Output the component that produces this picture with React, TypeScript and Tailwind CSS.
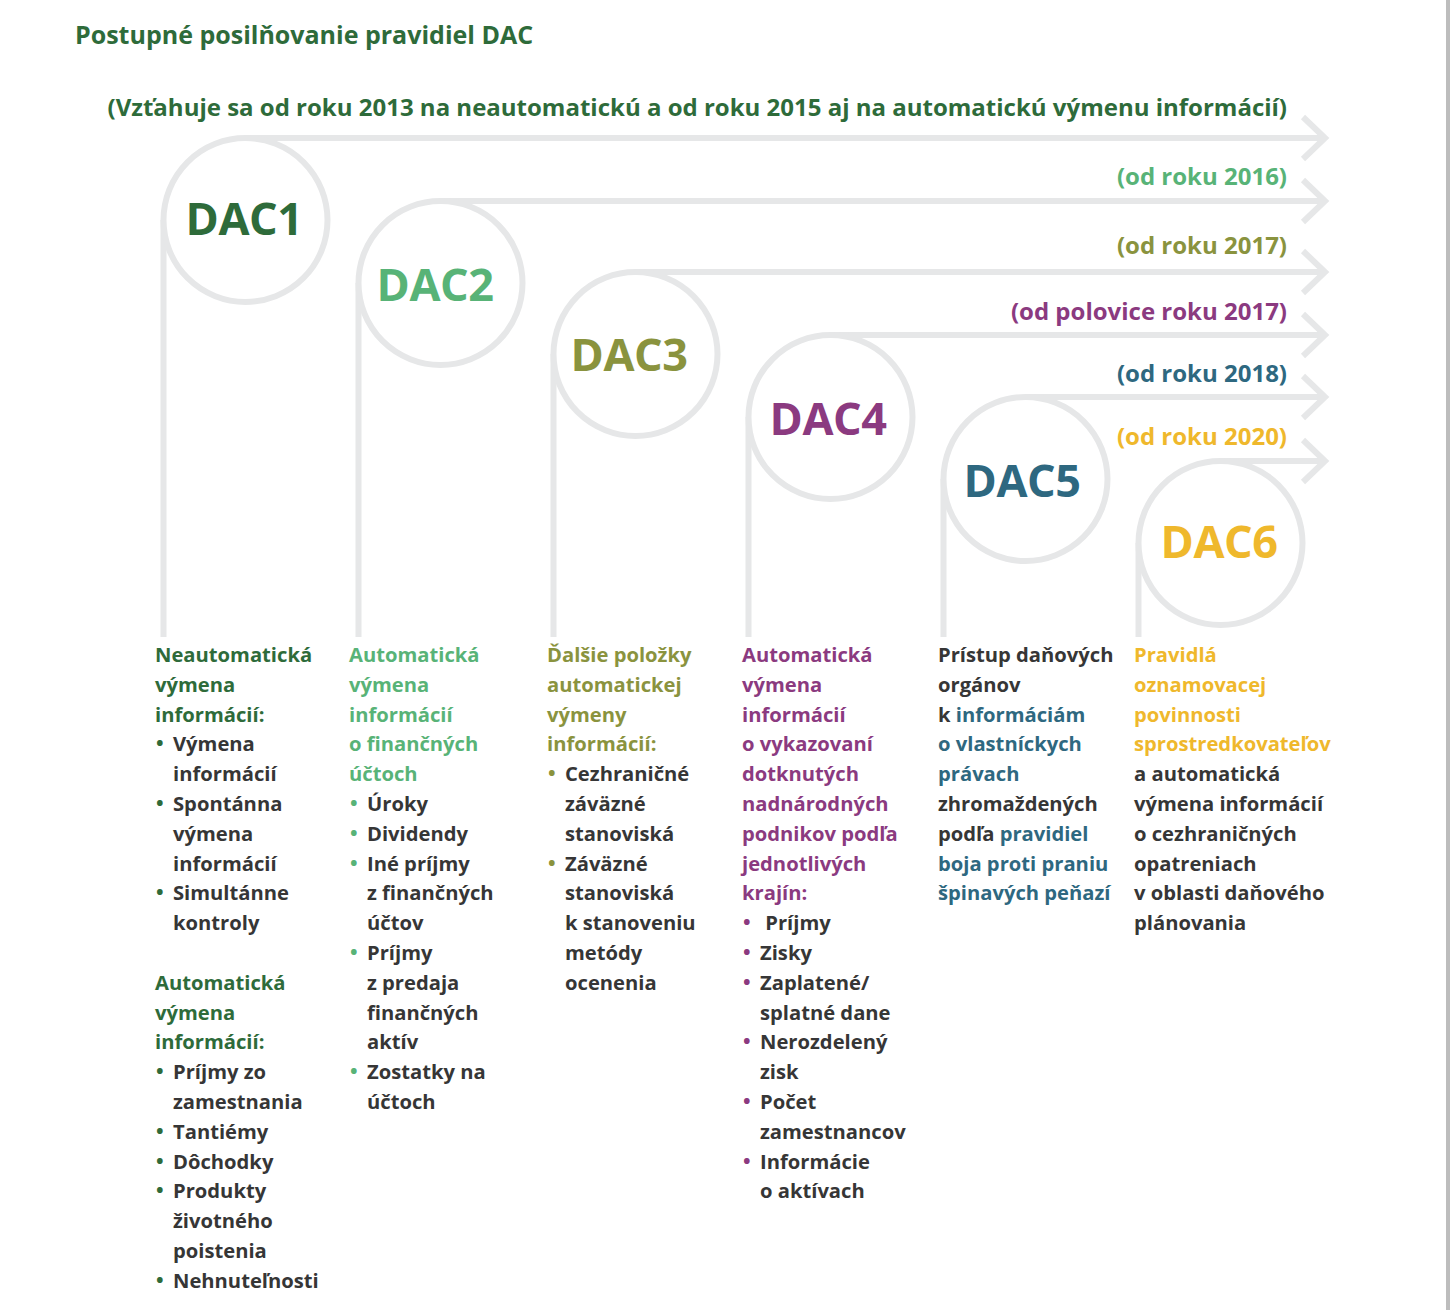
import React from "react";

const LINE = "#e6e7e8";
const lineYs = [138, 201, 272, 335, 397, 461];

const dacs = [
  { name: "DAC1", color: "text-[#2e6b3a]", x: 244, y: 218 },
  { name: "DAC2", color: "text-[#58b377]", x: 435, y: 284 },
  { name: "DAC3", color: "text-[#8a933e]", x: 629, y: 354 },
  { name: "DAC4", color: "text-[#8b3a80]", x: 828, y: 418 },
  { name: "DAC5", color: "text-[#2e6880]", x: 1022, y: 480 },
  { name: "DAC6", color: "text-[#efb82c]", x: 1219, y: 541 },
];

const dates = [
  { t: "(od roku 2016)", c: "text-[#58b377]", y: 176 },
  { t: "(od roku 2017)", c: "text-[#8a933e]", y: 245 },
  { t: "(od polovice roku 2017)", c: "text-[#8b3a80]", y: 311 },
  { t: "(od roku 2018)", c: "text-[#2e6880]", y: 373 },
  { t: "(od roku 2020)", c: "text-[#efb82c]", y: 436 },
];

function Diagram() {
  return (
    <svg className="absolute inset-0" width={1450} height={640} viewBox="0 0 1450 640" fill="none">
      {lineYs.map((ly, i) => {
        const cx = 245.5 + 195 * i;
        const cy = ly + 82;
        return (
          <g key={i} stroke={LINE} strokeWidth={6}>
            <line x1={cx} y1={ly} x2={1326} y2={ly} />
            <polyline points={`1303,${ly - 21} 1325,${ly} 1303,${ly + 21}`} strokeLinejoin="miter" />
            <line x1={cx - 82} y1={cy} x2={cx - 82} y2={637} />
            <circle cx={cx} cy={cy} r={82} fill="white" />
          </g>
        );
      })}
    </svg>
  );
}

type Seg = { t: string; c?: string };
type Line = Seg[] | string;

function Lines({ lines, color }: { lines: Line[]; color: string }) {
  return (
    <>
      {lines.map((l, i) => (
        <div key={i} className={`whitespace-pre ${color}`}>
          {typeof l === "string"
            ? l
            : l.map((s, j) => (
                <span key={j} className={s.c}>
                  {s.t}
                </span>
              ))}
        </div>
      ))}
    </>
  );
}

function Bullets({ items, dot }: { items: string[][]; dot: string }) {
  return (
    <ul>
      {items.map((it, i) => (
        <li key={i} className="relative pl-[18px]">
          <span className={`absolute left-[1px] top-[-1px] ${dot}`}>•</span>
          {it.map((l, j) => (
            <div key={j} className="whitespace-pre">
              {l}
            </div>
          ))}
        </li>
      ))}
    </ul>
  );
}

export default function App() {
  return (
    <div
      className="relative w-[1450px] h-[1310px] bg-white overflow-hidden border-r-4 border-[#bdbdbd] text-[#363636]"
      style={{ fontFamily: '"Open Sans", "Noto Sans", sans-serif' }}
    >
      <div className="relative h-[640px]">
        <Diagram />
        <h1 className="relative pl-[75px] pt-[18px] text-[25px] leading-[33px] font-bold text-[#2e6b3a]">
          Postupné posilňovanie pravidiel DAC
        </h1>
        <p className="relative mt-[40px] pr-[159px] text-right text-[24px] leading-[32px] font-bold text-[#2e6b3a]">
          (Vzťahuje sa od roku 2013 na neautomatickú a od roku 2015 aj na automatickú výmenu informácií)
        </p>
        {dates.map((d) => (
          <div
            key={d.t}
            className={`absolute right-[159px] -translate-y-1/2 text-[24px] leading-[32px] font-bold ${d.c}`}
            style={{ top: d.y }}
          >
            {d.t}
          </div>
        ))}
        {dacs.map((d) => (
          <div
            key={d.name}
            className={`absolute -translate-x-1/2 -translate-y-1/2 text-[45px] leading-[50px] font-bold tracking-[-0.5px] ${d.color}`}
            style={{ left: d.x, top: d.y }}
          >
            {d.name}
          </div>
        ))}
      </div>

      <div className="flex pl-[155px] text-[20.2px] leading-[29.8px] font-bold">
        <div className="w-[194px] shrink-0">
          <Lines color="text-[#2e6b3a]" lines={["Neautomatická", "výmena", "informácií:"]} />
          <Bullets
            dot="text-[#2e6b3a]"
            items={[["Výmena", "informácií"], ["Spontánna", "výmena", "informácií"], ["Simultánne", "kontroly"]]}
          />
          <div className="h-[29.8px]" />
          <Lines color="text-[#2e6b3a]" lines={["Automatická", "výmena", "informácií:"]} />
          <Bullets
            dot="text-[#2e6b3a]"
            items={[
              ["Príjmy zo", "zamestnania"],
              ["Tantiémy"],
              ["Dôchodky"],
              ["Produkty", "životného", "poistenia"],
              ["Nehnuteľnosti"],
            ]}
          />
        </div>
        <div className="w-[198px] shrink-0">
          <Lines
            color="text-[#58b377]"
            lines={["Automatická", "výmena", "informácií", "o finančných", "účtoch"]}
          />
          <Bullets
            dot="text-[#58b377]"
            items={[
              ["Úroky"],
              ["Dividendy"],
              ["Iné príjmy", "z finančných", "účtov"],
              ["Príjmy", "z predaja", "finančných", "aktív"],
              ["Zostatky na", "účtoch"],
            ]}
          />
        </div>
        <div className="w-[195px] shrink-0">
          <Lines
            color="text-[#8a933e]"
            lines={["Ďalšie položky", "automatickej", "výmeny", "informácií:"]}
          />
          <Bullets
            dot="text-[#8a933e]"
            items={[
              ["Cezhraničné", "záväzné", "stanoviská"],
              ["Záväzné", "stanoviská", "k stanoveniu", "metódy", "ocenenia"],
            ]}
          />
        </div>
        <div className="w-[196px] shrink-0">
          <Lines
            color="text-[#8b3a80]"
            lines={[
              "Automatická",
              "výmena",
              "informácií",
              "o vykazovaní",
              "dotknutých",
              "nadnárodných",
              "podnikov podľa",
              "jednotlivých",
              "krajín:",
            ]}
          />
          <Bullets
            dot="text-[#8b3a80]"
            items={[
              [" Príjmy"],
              ["Zisky"],
              ["Zaplatené/", "splatné dane"],
              ["Nerozdelený", "zisk"],
              ["Počet", "zamestnancov"],
              ["Informácie", "o aktívach"],
            ]}
          />
        </div>
        <div className="w-[196px] shrink-0">
          <Lines
            color="text-[#363636]"
            lines={[
              "Prístup daňových",
              "orgánov",
              [{ t: "k " }, { t: "informáciám", c: "text-[#2e6880]" }],
              [{ t: "o vlastníckych", c: "text-[#2e6880]" }],
              [{ t: "právach", c: "text-[#2e6880]" }],
              "zhromaždených",
              [{ t: "podľa " }, { t: "pravidiel", c: "text-[#2e6880]" }],
              [{ t: "boja proti praniu", c: "text-[#2e6880]" }],
              [{ t: "špinavých peňazí", c: "text-[#2e6880]" }],
            ]}
          />
        </div>
        <div className="flex-1">
          <Lines
            color="text-[#efb82c]"
            lines={["Pravidlá", "oznamovacej", "povinnosti", "sprostredkovateľov"]}
          />
          <Lines
            color="text-[#363636]"
            lines={[
              "a automatická",
              "výmena informácií",
              "o cezhraničných",
              "opatreniach",
              "v oblasti daňového",
              "plánovania",
            ]}
          />
        </div>
      </div>
    </div>
  );
}
